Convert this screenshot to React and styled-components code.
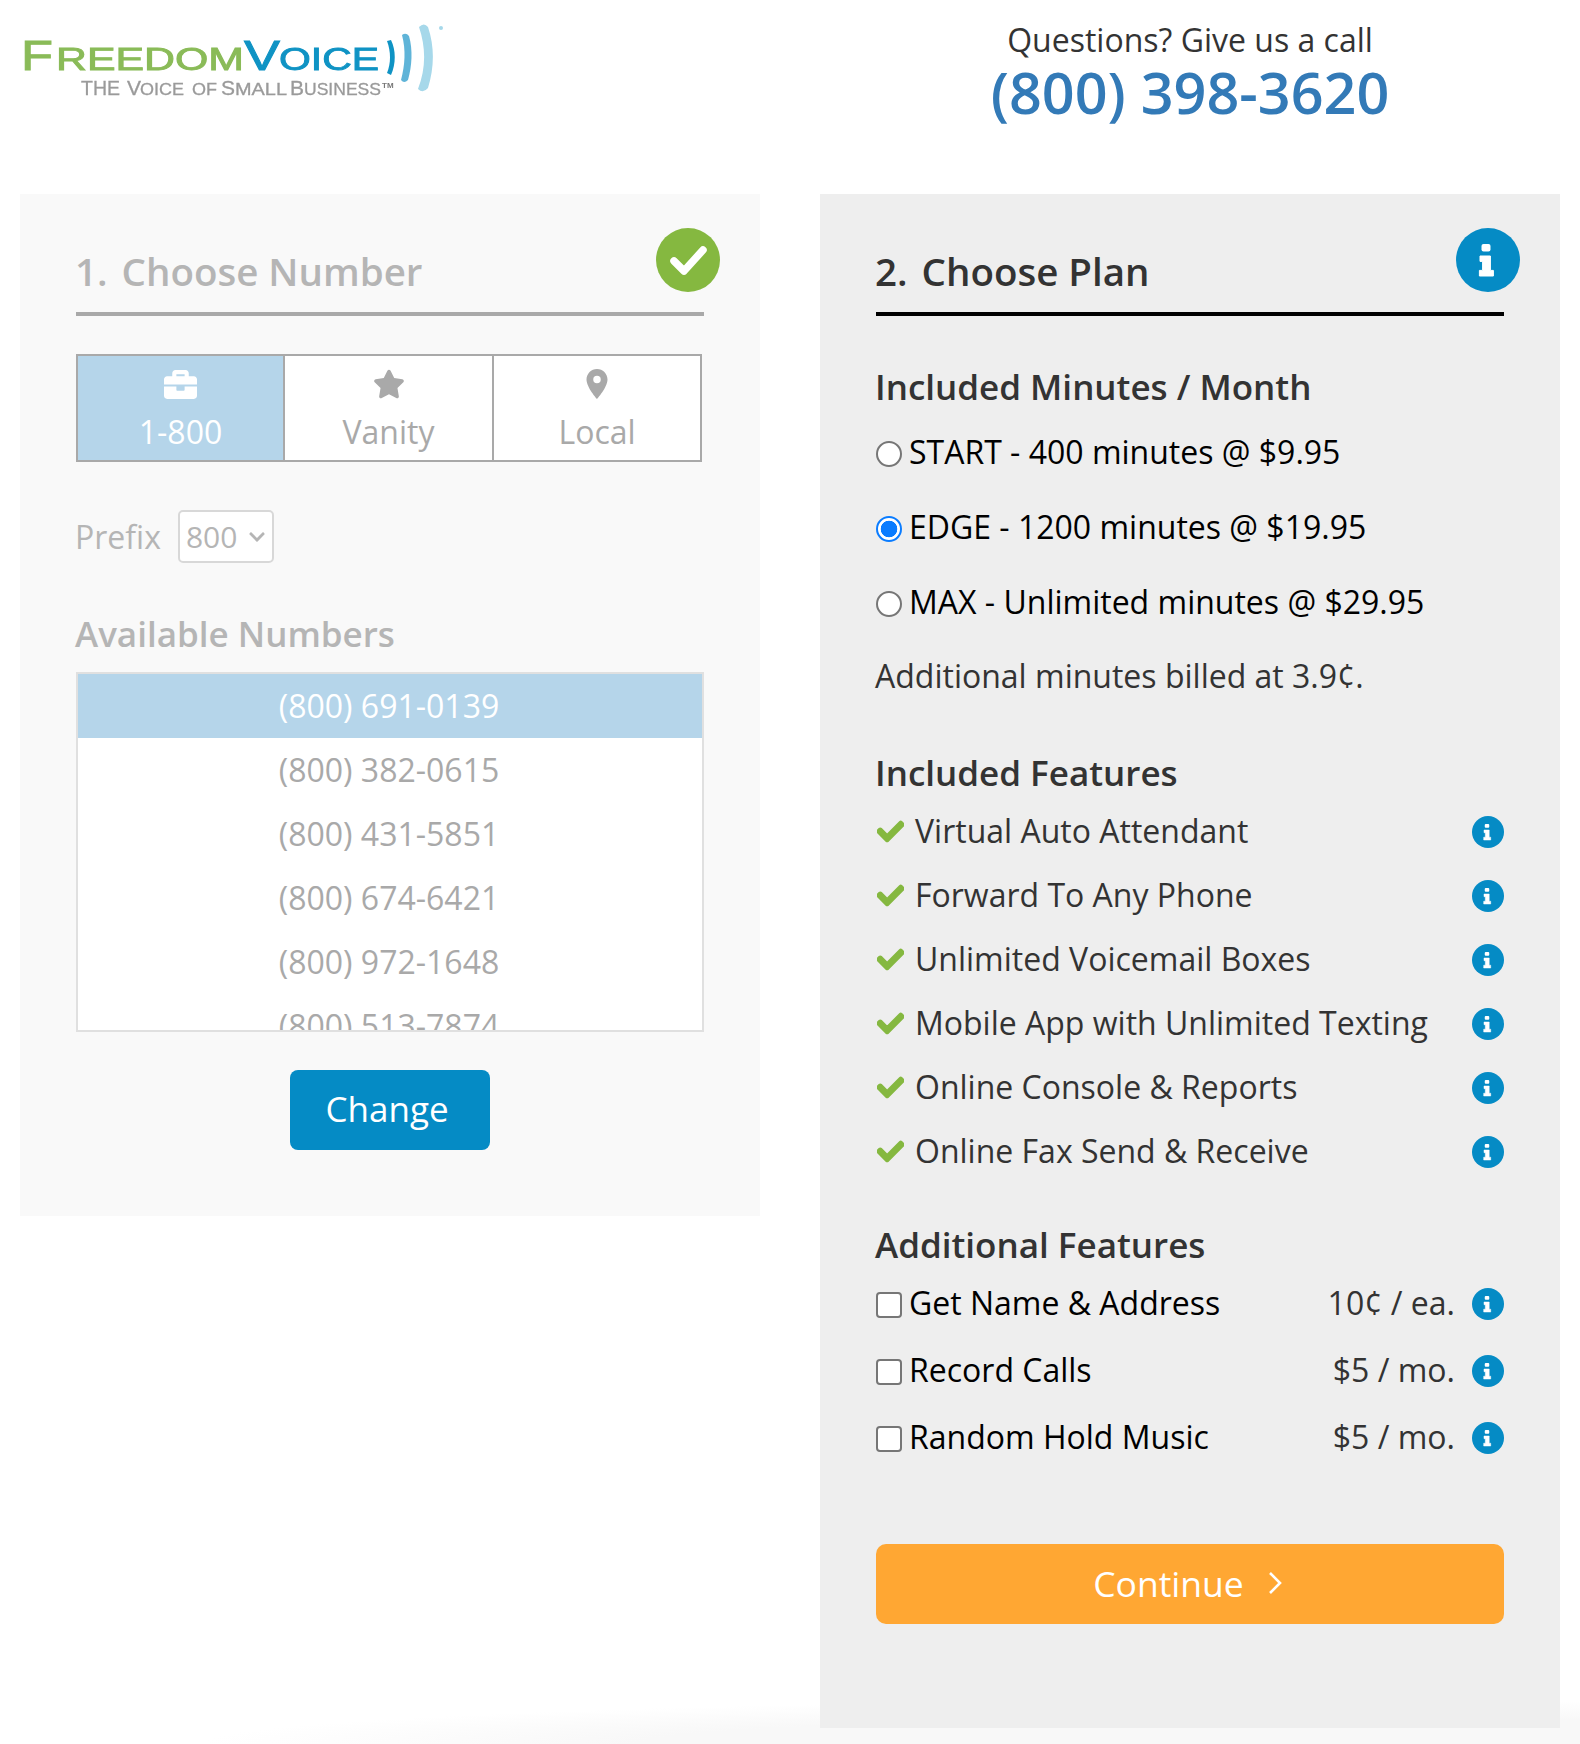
import React from "react";
import styled, { createGlobalStyle } from "styled-components";
import { FaBriefcase, FaStar, FaCheck, FaChevronDown } from "react-icons/fa";
import { MdPlace } from "react-icons/md";

const GlobalStyle = createGlobalStyle`
  html, body {
    margin: 0;
    background: #fff;
    font-family: "Open Sans", "Noto Sans", sans-serif;
    color: #333;
  }
  * { box-sizing: border-box; }
`;

const Page = styled.div`
  width: 1580px;
  height: 1744px;
  padding: 0 20px;
  overflow: hidden;
  background: radial-gradient(ellipse 1100px 44px at 1300px 100%, #f8f8f8 60%, #fff 100%);
`;

const Header = styled.header`
  display: grid;
  grid-template-columns: 740px 740px;
  column-gap: 60px;
  height: 194px;
`;

const LogoArt = styled.svg`
  display: block;
  width: 500px;
  height: 130px;
  margin-left: -20px;
  filter: blur(0.6px);
`;

const Contact = styled.div`
  text-align: center;
  padding-top: 20px;
`;

const ContactLabel = styled.div`
  font-size: 32px;
  line-height: 40px;
`;

const ContactPhone = styled.div`
  font-size: 57.5px;
  font-weight: 600;
  line-height: 64px;
  color: #337ab7;
`;

const Columns = styled.div`
  display: grid;
  grid-template-columns: 740px 740px;
  column-gap: 60px;
  align-items: start;
`;

const Panel = styled.section`
  position: relative;
  height: ${(p) => p.$height}px;
  padding: 52px 56px 0;
  background: ${(p) => (p.$done ? "#f9f9f9" : "#eeeeee")};
`;

const PanelTitle = styled.h2`
  display: flex;
  gap: 15px;
  margin: 0;
  height: 70px;
  border-bottom: 4px solid ${(p) => (p.$done ? "#a9a9a9" : "#000")};
  font-size: 38.5px;
  font-weight: 600;
  line-height: 50px;
  color: ${(p) => (p.$done ? "#b5b5b5" : "#333")};
  span { margin-left: -1px; }
`;

const StatusBadge = styled.svg`
  position: absolute;
  top: 34px;
  right: 40px;
  width: 64px;
  height: 64px;
`;

const Tabs = styled.div`
  display: grid;
  grid-template-columns: 205px 209px 208px;
  width: 626px;
  height: 108px;
  margin-top: 38px;
  border: 2px solid #a9a9a9;
  background: #fff;
`;

const Tab = styled.div`
  display: flex;
  flex-direction: column;
  align-items: center;
  padding-top: 12px;
  font-size: 32px;
  line-height: 44px;
  color: ${(p) => (p.$active ? "#fff" : "#a9a9a9")};
  background: ${(p) => (p.$active ? "#b5d5ea" : "#fff")};
  & + & { border-left: 2px solid #a9a9a9; }
`;

const TabIcon = styled.div`
  display: flex;
  align-items: center;
  justify-content: center;
  height: 32px;
  font-size: ${(p) => p.$size || 30}px;
  margin-bottom: 10px;
`;

const PrefixRow = styled.div`
  display: flex;
  align-items: center;
  gap: 17px;
  margin: 48px 0 0 -1px;
  height: 53px;
  font-size: 32px;
  color: #b5b5b5;
`;

const SelectWrap = styled.div`
  position: relative;
  display: flex;
`;

const PrefixSelect = styled.select`
  appearance: none;
  width: 96px;
  height: 53px;
  padding: 0 0 0 6px;
  border: 2px solid #d8d8d8;
  border-radius: 5px;
  background-color: #fff;
  font-family: inherit;
  font-size: 30px;
  color: #b5b5b5;
`;

const SelectChevron = styled.span`
  position: absolute;
  top: 18px;
  right: 8px;
  display: flex;
  font-size: 18px;
  color: #b5b5b5;
`;

const AvailableTitle = styled.h3`
  margin: 46px 0 0 -1px;
  font-size: 35px;
  font-weight: 600;
  line-height: 50px;
  color: #b5b5b5;
`;

const NumberList = styled.div`
  height: 360px;
  margin-top: 13px;
  border: 2px solid #e0e0e0;
  background: #fff;
  overflow: hidden;
`;

const NumberRow = styled.div`
  height: 64px;
  padding-right: 2px;
  font-size: 32px;
  line-height: 64px;
  text-align: center;
  color: ${(p) => (p.$active ? "#fff" : "#a9a9a9")};
  background: ${(p) => (p.$active ? "#b5d5ea" : "transparent")};
`;

const ChangeButton = styled.button`
  display: block;
  width: 200px;
  height: 80px;
  margin: 38px auto 0;
  padding: 0 6px 4px 0;
  border: 0;
  border-radius: 8px;
  background: #058bc5;
  font-family: inherit;
  font-size: 35px;
  color: #fff;
`;

const GroupTitle = styled.h3`
  margin: ${(p) => p.$top}px 0 0 -1px;
  font-size: 35px;
  font-weight: 600;
  line-height: 50px;
  color: #333;
`;

const PlanList = styled.div`
  margin-top: 2px;
`;

const PlanRow = styled.label`
  display: flex;
  align-items: center;
  height: 75px;
  font-size: 32px;
  color: #000;
`;

const PlanRadio = styled.input`
  appearance: none;
  width: 26px;
  height: 26px;
  margin: 4px 7px 0 0;
  flex: none;
  border: 2px solid #767676;
  border-radius: 50%;
  background: #fff;
  &:checked {
    border-color: #0a7cff;
    background: radial-gradient(circle, #0a7cff 0 8px, #fff 8.6px);
  }
`;

const PlanNote = styled.p`
  margin: 7px 0 0 -1px;
  font-size: 32px;
  line-height: 60px;
  color: #333;
`;

const FeatureRow = styled.div`
  display: flex;
  align-items: center;
  height: 64px;
  font-size: 32px;
  color: #333;
`;

const FeatureCheck = styled.span`
  display: flex;
  width: 39px;
  margin-top: 2px;
  padding-left: 1px;
  flex: none;
  font-size: 27px;
  color: #85b840;
  svg {
    stroke: currentColor;
    stroke-width: 30;
  }
`;

const InfoArt = styled.svg`
  flex: none;
  width: 32px;
  height: 32px;
  margin: ${(p) => (p.$pushed ? "4px 0 0 auto" : "2px 0 0 0")};
`;

const AddonList = styled.div`
  margin-top: -1px;
`;

const AddonRow = styled.div`
  display: flex;
  align-items: center;
  height: 67px;
  font-size: 32px;
  color: #000;
`;

const AddonBox = styled.input`
  appearance: none;
  width: 26px;
  height: 26px;
  margin: 4px 7px 0 0;
  flex: none;
  border: 2px solid #767676;
  border-radius: 4px;
  background: #fff;
`;

const AddonPrice = styled.span`
  margin-left: auto;
  margin-right: 17px;
  color: #333;
`;

const ContinueButton = styled.button`
  display: flex;
  align-items: center;
  justify-content: center;
  gap: 24px;
  width: 100%;
  height: 80px;
  margin-top: 74px;
  padding: 0 5px 3px 0;
  border: 0;
  border-radius: 10px;
  background: #ffa733;
  font-family: inherit;
  font-size: 35.5px;
  color: #fff;
`;

const ChevronArt = styled.svg`
  width: 14px;
  height: 24px;
`;

const numbers = [
  "(800) 691-0139",
  "(800) 382-0615",
  "(800) 431-5851",
  "(800) 674-6421",
  "(800) 972-1648",
  "(800) 513-7874",
];

const plans = [
  { label: "START - 400 minutes @ $9.95" },
  { label: "EDGE - 1200 minutes @ $19.95", checked: true },
  { label: "MAX - Unlimited minutes @ $29.95" },
];

const features = [
  "Virtual Auto Attendant",
  "Forward To Any Phone",
  "Unlimited Voicemail Boxes",
  "Mobile App with Unlimited Texting",
  "Online Console & Reports",
  "Online Fax Send & Receive",
];

const addons = [
  { label: "Get Name & Address", price: "10¢ / ea." },
  { label: "Record Calls", price: "$5 / mo." },
  { label: "Random Hold Music", price: "$5 / mo." },
];

// circle with the chunky "i", drawn on a 64 box so it scales for both sizes
const InfoShape = () => (
  <>
    <circle cx="32" cy="32" r="32" fill="#058bc5" />
    <rect x="25.5" y="16" width="9" height="7.6" rx="2" fill="#fff" />
    <path d="M24 28 H34.4 V42.4 H37.4 V48 H23.4 V42.4 H26.6 V33.4 H24 Z" fill="#fff" stroke="#fff" strokeWidth="1" strokeLinejoin="round" />
  </>
);

const Logo = () => (
  <LogoArt viewBox="0 0 500 130">
    <g fontFamily="'Liberation Sans', sans-serif">
      <g fill="#8abb58" stroke="#8abb58" strokeWidth="0.9">
        <text x="21" y="70" fontSize="42" textLength="32" lengthAdjust="spacingAndGlyphs">F</text>
        <text x="56" y="70" fontSize="32" textLength="188" lengthAdjust="spacingAndGlyphs">REEDOM</text>
      </g>
      <g fill="#0f93c4" stroke="#0f93c4" strokeWidth="0.9">
        <text x="244" y="70" fontSize="42" textLength="36" lengthAdjust="spacingAndGlyphs">V</text>
        <text x="279" y="70" fontSize="32" textLength="100" lengthAdjust="spacingAndGlyphs">OICE</text>
      </g>
      <g fill="#9a9a9a" stroke="#9a9a9a" strokeWidth="0.3">
        <text x="81" y="95" fontSize="21" textLength="39" lengthAdjust="spacingAndGlyphs">THE</text>
        <text x="127" y="95" fontSize="21">V</text>
        <text x="140" y="95" fontSize="17" textLength="44" lengthAdjust="spacingAndGlyphs">OICE</text>
        <text x="192" y="95" fontSize="17" textLength="25" lengthAdjust="spacingAndGlyphs">OF</text>
        <text x="221" y="95" fontSize="21">S</text>
        <text x="235" y="95" fontSize="17" textLength="52" lengthAdjust="spacingAndGlyphs">MALL</text>
        <text x="290" y="95" fontSize="21">B</text>
        <text x="304" y="95" fontSize="17" textLength="77" lengthAdjust="spacingAndGlyphs">USINESS</text>
      </g>
      <text x="382" y="88" fontSize="8" fontWeight="700" fill="#777">TM</text>
    </g>
    <path d="M387 41 L391 40 C396 50 396 64 391 75 L387 73 C391 63 391 52 387 41Z" fill="#0f93c4" />
    <path d="M402 35 Q406 32 409 36 C413 50 412 66 408 80 Q404 84 401 80 C405 65 406 50 402 35Z" fill="#5fb4d8" />
    <path d="M419 27 Q424 22 428 27 C435 48 434 68 428 88 Q423 94 418 89 C426 68 426 48 419 27Z" fill="#a6d8ea" />
    <circle cx="441" cy="28" r="2" fill="#a6d8ea" />
  </LogoArt>
);

const App = () => (
  <Page>
    <GlobalStyle />
    <Header>
      <Logo />
      <Contact>
        <ContactLabel>Questions? Give us a call</ContactLabel>
        <ContactPhone>(800) 398-3620</ContactPhone>
      </Contact>
    </Header>
    <Columns>
      <Panel $done $height={1022}>
        <PanelTitle $done>
          <span>1.</span>
          <span>Choose Number</span>
        </PanelTitle>
        <StatusBadge viewBox="0 0 64 64">
          <circle cx="32" cy="32" r="32" fill="#85b840" />
          <path d="M18 33 L28 43 L47 22" fill="none" stroke="#fff" strokeWidth="7.5" strokeLinejoin="round" strokeLinecap="round" />
        </StatusBadge>
        <Tabs>
          <Tab $active>
            <TabIcon $size={33}><FaBriefcase /></TabIcon>
            1-800
          </Tab>
          <Tab>
            <TabIcon $size={32}><FaStar /></TabIcon>
            Vanity
          </Tab>
          <Tab>
            <TabIcon $size={36}><MdPlace /></TabIcon>
            Local
          </Tab>
        </Tabs>
        <PrefixRow>
          Prefix
          <SelectWrap>
            <PrefixSelect defaultValue="800">
              <option value="800">800</option>
            </PrefixSelect>
            <SelectChevron><FaChevronDown /></SelectChevron>
          </SelectWrap>
        </PrefixRow>
        <AvailableTitle>Available Numbers</AvailableTitle>
        <NumberList>
          {numbers.map((n, i) => (
            <NumberRow key={n} $active={i === 0}>{n}</NumberRow>
          ))}
        </NumberList>
        <ChangeButton>Change</ChangeButton>
      </Panel>
      <Panel $height={1534}>
        <PanelTitle>
          <span>2.</span>
          <span>Choose Plan</span>
        </PanelTitle>
        <StatusBadge viewBox="0 0 64 64">
          <InfoShape />
        </StatusBadge>
        <GroupTitle $top={46}>Included Minutes / Month</GroupTitle>
        <PlanList>
          {plans.map((p) => (
            <PlanRow key={p.label}>
              <PlanRadio type="radio" name="plan" defaultChecked={p.checked} />
              {p.label}
            </PlanRow>
          ))}
        </PlanList>
        <PlanNote>Additional minutes billed at 3.9¢.</PlanNote>
        <GroupTitle $top={42}>Included Features</GroupTitle>
        {features.map((f) => (
          <FeatureRow key={f}>
            <FeatureCheck><FaCheck /></FeatureCheck>
            {f}
            <InfoArt $pushed viewBox="0 0 64 64"><InfoShape /></InfoArt>
          </FeatureRow>
        ))}
        <GroupTitle $top={38}>Additional Features</GroupTitle>
        <AddonList>
          {addons.map((a) => (
            <AddonRow key={a.label}>
              <AddonBox type="checkbox" />
              {a.label}
              <AddonPrice>{a.price}</AddonPrice>
              <InfoArt viewBox="0 0 64 64"><InfoShape /></InfoArt>
            </AddonRow>
          ))}
        </AddonList>
        <ContinueButton>
          Continue
          <ChevronArt viewBox="0 0 14 24">
            <path d="M2 2 L12 12 L2 22" fill="none" stroke="#fff" strokeWidth="2.6" />
          </ChevronArt>
        </ContinueButton>
      </Panel>
    </Columns>
  </Page>
);

export default App;
